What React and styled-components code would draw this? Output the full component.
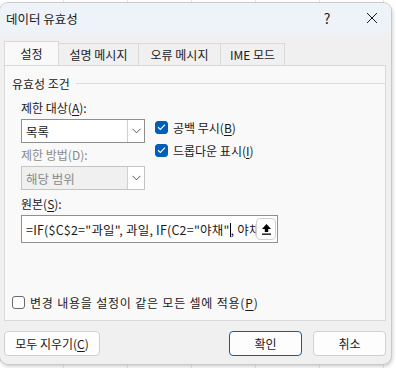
import React from "react";
import styled, { createGlobalStyle } from "styled-components";

const GlobalStyle = createGlobalStyle`
  html, body {
    margin: 0;
    padding: 0;
    width: 396px;
    height: 368px;
    overflow: hidden;
    background: #ffffff;
    background-image:
      repeating-linear-gradient(90deg, transparent 0 63px, #e6e6e6 63px 64px);
    font-family: "Noto Sans CJK KR", "Noto Sans", sans-serif;
    font-size: 12px;
    color: #1a1a1a;
  }
`;

const Dialog = styled.div`
  margin-top: 3px;
  width: 391px;
  height: 361px;
  background: #f0f0f0;
  border-radius: 8px;
  box-shadow: 0 0 0 1px #c9c9c9, 1px 2px 4px rgba(0, 0, 0, 0.25);
  overflow: hidden;
  display: flex;
  flex-direction: column;
`;

const TitleBar = styled.div`
  height: 30px;
  background: #eef2f9;
  display: flex;
  align-items: center;
  padding-left: 6px;
  font-size: 12.5px;
`;

const Title = styled.div`
  flex: 1;
`;

const TitleButton = styled.div`
  width: ${p => p.$w}px;
  display: flex;
  justify-content: center;
  align-items: center;
  font-size: 14px;
`;

const Body = styled.div`
  padding: 9px 5px 0 4px;
  display: flex;
  flex-direction: column;
`;

const Tabs = styled.div`
  display: flex;
  height: 23px;
`;

const Tab = styled.div`
  width: ${p => p.$w}px;
  box-sizing: border-box;
  display: flex;
  align-items: center;
  justify-content: center;
  border: 1px solid #d9d9d9;
  border-bottom: none;
  margin-left: -1px;
  background: ${p => (p.$active ? "#f9f9f9" : "#f0f0f0")};
  position: relative;
  z-index: ${p => (p.$active ? 1 : 0)};
  height: ${p => (p.$active ? "24px" : "22px")};
  align-self: flex-end;
  &:first-child {
    margin-left: 0;
  }
`;

const Panel = styled.div`
  height: 256px;
  background: #f9f9f9;
  border: 1px solid #d9d9d9;
  box-sizing: border-box;
  padding: 9px 0 0 7px;
  display: flex;
  flex-direction: column;
`;

const GroupHead = styled.div`
  display: flex;
  align-items: center;
  gap: 6px;
  &::after {
    content: "";
    flex: 1;
    height: 1px;
    background: #dcdcdc;
  }
`;

const Group = styled.div`
  padding-left: 9px;
  display: flex;
  flex-direction: column;
`;

const Row = styled.div`
  display: flex;
  gap: 10px;
`;

const Col = styled.div`
  display: flex;
  flex-direction: column;
`;

const Label = styled.div`
  height: 17px;
  line-height: 17px;
  margin-top: ${p => p.$mt || 0}px;
  margin-bottom: 3px;
  color: ${p => (p.$disabled ? "#8a8a8a" : "#1a1a1a")};
  u {
    text-underline-offset: 2px;
  }
`;

const Combo = styled.div`
  width: 124px;
  height: 24px;
  box-sizing: border-box;
  border: 1px solid ${p => (p.$disabled ? "#c4c4c4" : "#8f8f8f")};
  background: ${p => (p.$disabled ? "#f0f0f0" : "#ffffff")};
  color: ${p => (p.$disabled ? "#8a8a8a" : "#1a1a1a")};
  display: flex;
  align-items: stretch;
`;

const ComboText = styled.div`
  flex: 1;
  display: flex;
  align-items: center;
  padding-left: 4px;
  font-size: 12.5px;
`;

const ComboButton = styled.div`
  width: 16px;
  border-left: 1px solid #d0d0d0;
  display: flex;
  align-items: center;
  justify-content: center;
  background: ${p => (p.$disabled ? "#f0f0f0" : "#ffffff")};
`;

const Checks = styled.div`
  display: flex;
  flex-direction: column;
  gap: 7px;
`;

const Check = styled.div`
  display: flex;
  align-items: center;
  gap: 5px;
  height: 16px;
  white-space: nowrap;
  u {
    text-underline-offset: 2px;
  }
`;

const Box = styled.div`
  width: 13px;
  height: 13px;
  box-sizing: border-box;
  border-radius: 3px;
  background: ${p => (p.$checked ? "#005fb8" : "#ffffff")};
  border: 1px solid ${p => (p.$checked ? "#005fb8" : "#6a6a6a")};
  display: flex;
  align-items: center;
  justify-content: center;
`;

const Source = styled.div`
  width: 257px;
  height: 28px;
  box-sizing: border-box;
  border: 1px solid #8f8f8f;
  background: #ffffff;
  display: flex;
  align-items: center;
  padding: 0 1px 0 4px;
`;

const SourceText = styled.div`
  flex: 1;
  white-space: nowrap;
  overflow: hidden;
  font-size: 12.5px;
  letter-spacing: 0.2px;
`;

const Caret = styled.span`
  display: inline-block;
  width: 1px;
  height: 14px;
  background: #000;
  vertical-align: -2px;
`;

const RefButton = styled.div`
  width: 20px;
  height: 22px;
  box-sizing: border-box;
  border: 1px solid #d0d0d0;
  border-radius: 4px;
  background: #fdfdfd;
  display: flex;
  align-items: center;
  justify-content: center;
`;

const ApplyAll = styled(Check)`
  margin-top: 51px;
  letter-spacing: 0.8px;
`;

const Footer = styled.div`
  display: flex;
  align-items: center;
  padding: 10px 0 0 0;
  gap: 11px;
`;

const Button = styled.div`
  width: ${p => p.$w}px;
  height: 25px;
  box-sizing: border-box;
  border: 1px solid ${p => (p.$primary ? "#005fb8" : "#d0d0d0")};
  border-radius: 4px;
  background: #fdfdfd;
  display: flex;
  align-items: center;
  justify-content: center;
  margin-left: ${p => (p.$push ? "auto" : "0")};
  u {
    text-underline-offset: 2px;
  }
`;

const Chevron = () => (
  <svg width="9" height="6" viewBox="0 0 9 6">
    <path d="M0.5 0.8 L4.5 4.8 L8.5 0.8" fill="none" stroke="#555" strokeWidth="1" />
  </svg>
);

const Tick = () => (
  <svg width="9" height="8" viewBox="0 0 9 8">
    <path d="M1 4.2 L3.4 6.4 L8 1.6" fill="none" stroke="#ffffff" strokeWidth="1.2" />
  </svg>
);

const Upload = () => (
  <svg width="11" height="12" viewBox="0 0 11 12">
    <path d="M5.5 1 L10 6 H7.2 V9 H3.8 V6 H1 Z" fill="#000" />
    <rect x="1" y="10.5" width="9" height="1.3" fill="#000" />
  </svg>
);

const Close = () => (
  <svg width="12" height="12" viewBox="0 0 12 12">
    <path d="M1 1 L11 11 M11 1 L1 11" stroke="#1a1a1a" strokeWidth="1" />
  </svg>
);

const App = () => {
  return (
    <>
      <GlobalStyle />
      <Dialog>
        <TitleBar>
          <Title>데이터 유효성</Title>
          <TitleButton $w={52}>?</TitleButton>
          <TitleButton $w={38}>
            <Close />
          </TitleButton>
        </TitleBar>
        <Body>
          <Tabs>
            <Tab $w={55} $active>설정</Tab>
            <Tab $w={81}>설명 메시지</Tab>
            <Tab $w={83}>오류 메시지</Tab>
            <Tab $w={65}>IME 모드</Tab>
          </Tabs>
          <Panel>
            <GroupHead>유효성 조건</GroupHead>
            <Group>
              <Label $mt={7}>
                제한 대상(<u>A</u>):
              </Label>
              <Row>
                <Col>
                  <Combo>
                    <ComboText>목록</ComboText>
                    <ComboButton>
                      <Chevron />
                    </ComboButton>
                  </Combo>
                  <Label $mt={3} $disabled>
                    제한 방법(D):
                  </Label>
                  <Combo $disabled>
                    <ComboText>해당 범위</ComboText>
                    <ComboButton>
                      <Chevron />
                    </ComboButton>
                  </Combo>
                </Col>
                <Checks>
                  <Check>
                    <Box $checked>
                      <Tick />
                    </Box>
                    <span>
                      공백 무시(<u>B</u>)
                    </span>
                  </Check>
                  <Check>
                    <Box $checked>
                      <Tick />
                    </Box>
                    <span>
                      드롭다운 표시(<u>I</u>)
                    </span>
                  </Check>
                </Checks>
              </Row>
              <Label $mt={5}>
                원본(<u>S</u>):
              </Label>
              <Source>
                <SourceText>
                  =IF($C$2="과일", 과일, IF(C2="야채"<Caret />, 야채
                </SourceText>
                <RefButton>
                  <Upload />
                </RefButton>
              </Source>
            </Group>
            <ApplyAll>
              <Box />
              <span>
                변경 내용을 설정이 같은 모든 셀에 적용(<u>P</u>)
              </span>
            </ApplyAll>
          </Panel>
          <Footer>
            <Button $w={96}>
              모두 지우기(<u>C</u>)
            </Button>
            <Button $w={73} $primary $push>
              확인
            </Button>
            <Button $w={73}>취소</Button>
          </Footer>
        </Body>
      </Dialog>
    </>
  );
};

export default App;
